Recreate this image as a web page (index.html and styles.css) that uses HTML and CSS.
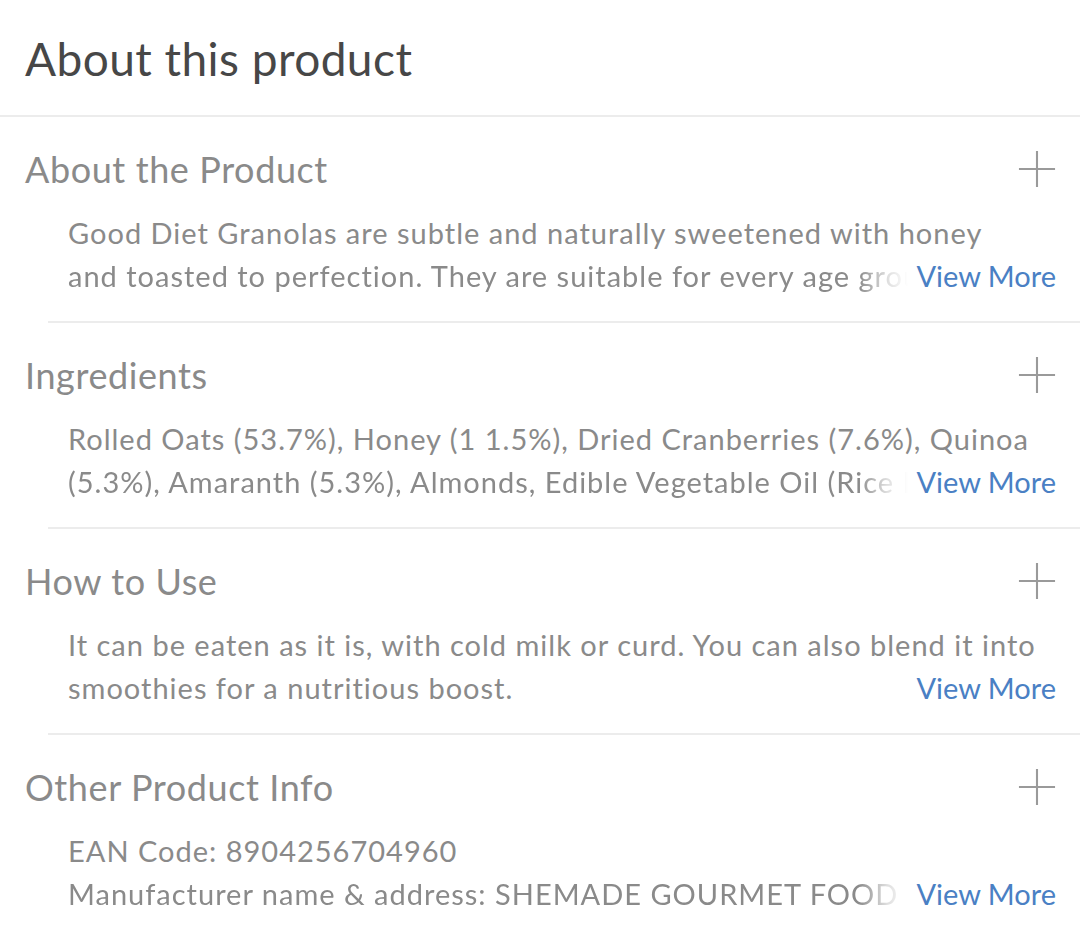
FILE: index.html
```html
<!DOCTYPE html>
<html lang="en">
<head>
<meta charset="utf-8">
<title>About this product</title>
<link rel="stylesheet" href="styles.css">
</head>
<body>
<div class="page">
  <header class="page-head">
    <h1 class="page-title">About this product</h1>
  </header>

  <section class="section">
    <div class="section-head">
      <h2 class="section-title">About the Product</h2>
      <svg class="plus" viewBox="0 0 40 40" aria-hidden="true"><path d="M20 1V39M1 20H39"/></svg>
    </div>
    <div class="section-body">
      <div class="line">Good Diet Granolas are subtle and naturally sweetened with honey</div>
      <div class="line last">
        <span class="clip"><span class="fade">and toasted to perfection. They are suitable for every age group and make a healthy breakfast</span></span>
        <a class="more" href="#">View More</a>
      </div>
    </div>
  </section>

  <section class="section">
    <div class="section-head">
      <h2 class="section-title">Ingredients</h2>
      <svg class="plus" viewBox="0 0 40 40" aria-hidden="true"><path d="M20 1V39M1 20H39"/></svg>
    </div>
    <div class="section-body">
      <div class="line">Rolled Oats (53.7%), Honey (1 1.5%), Dried Cranberries (7.6%), Quinoa</div>
      <div class="line last">
        <span class="clip"><span class="fade">(5.3%), Amaranth (5.3%), Almonds, Edible Vegetable Oil (Rice Bran Oil)</span></span>
        <a class="more" href="#">View More</a>
      </div>
    </div>
  </section>

  <section class="section">
    <div class="section-head">
      <h2 class="section-title">How to Use</h2>
      <svg class="plus" viewBox="0 0 40 40" aria-hidden="true"><path d="M20 1V39M1 20H39"/></svg>
    </div>
    <div class="section-body">
      <div class="line">It can be eaten as it is, with cold milk or curd. You can also blend it into</div>
      <div class="line last">
        <span class="clip"><span>smoothies for a nutritious boost.</span></span>
        <a class="more" href="#">View More</a>
      </div>
    </div>
  </section>

  <section class="section">
    <div class="section-head">
      <h2 class="section-title">Other Product Info</h2>
      <svg class="plus" viewBox="0 0 40 40" aria-hidden="true"><path d="M20 1V39M1 20H39"/></svg>
    </div>
    <div class="section-body">
      <div class="line">EAN Code: 8904256704960</div>
      <div class="line last">
        <span class="clip"><span class="fade">Manufacturer name &amp; address: SHEMADE GOURMET FOOD PRIVATE LIMITED</span></span>
        <a class="more" href="#">View More</a>
      </div>
    </div>
  </section>
</div>
</body>
</html>
```

FILE: styles.css
```css
* { box-sizing: border-box; }
html, body { margin: 0; padding: 0; background: #fff; }
body {
  font-family: "Lato", "Open Sans", sans-serif;
  color: #8a8a8a;
  overflow: hidden;
}
.page { width: 1080px; }
.page-head {
  height: 117px;
  padding: 33px 25px 0;
  border-bottom: 2px solid #ececec;
}
.page-title {
  margin: 0;
  font-size: 46px;
  font-weight: 400;
  color: #474747;
  line-height: 52px;
  letter-spacing: 0.45px;
}
.section {
  margin-left: 48px;
  height: 206px;
  border-bottom: 2px solid #ececec;
  padding-top: 30px;
}
.section:last-child { border-bottom: none; }
.section-head {
  margin-left: -23px;
  display: flex;
  align-items: center;
  justify-content: space-between;
  padding-right: 24px;
  height: 44px;
}
.section-title {
  margin: 0;
  font-size: 36px;
  font-weight: 400;
  color: #8a8a8a;
  letter-spacing: 0.6px;
}
.plus { width: 38px; height: 38px; }
.plus path { stroke: #9a9a9a; stroke-width: 2.2; fill: none; }
.section-body {
  padding: 20px 24px 0 20px;
  font-size: 29px;
  line-height: 43px;
}
.line { white-space: nowrap; letter-spacing: 1px; }
.line.last { display: flex; align-items: baseline; }
.clip { flex: 1; min-width: 0; overflow: hidden; }
.fade {
  display: block;
  -webkit-mask-image: linear-gradient(to left, transparent 0, rgba(0,0,0,0.3) 22px, #000 50px);
  mask-image: linear-gradient(to left, transparent 0, rgba(0,0,0,0.3) 22px, #000 50px);
}
.more {
  flex: none;
  margin-left: 8px;
  color: #4a80c4;
  text-decoration: none;
  letter-spacing: 0;
}
```
